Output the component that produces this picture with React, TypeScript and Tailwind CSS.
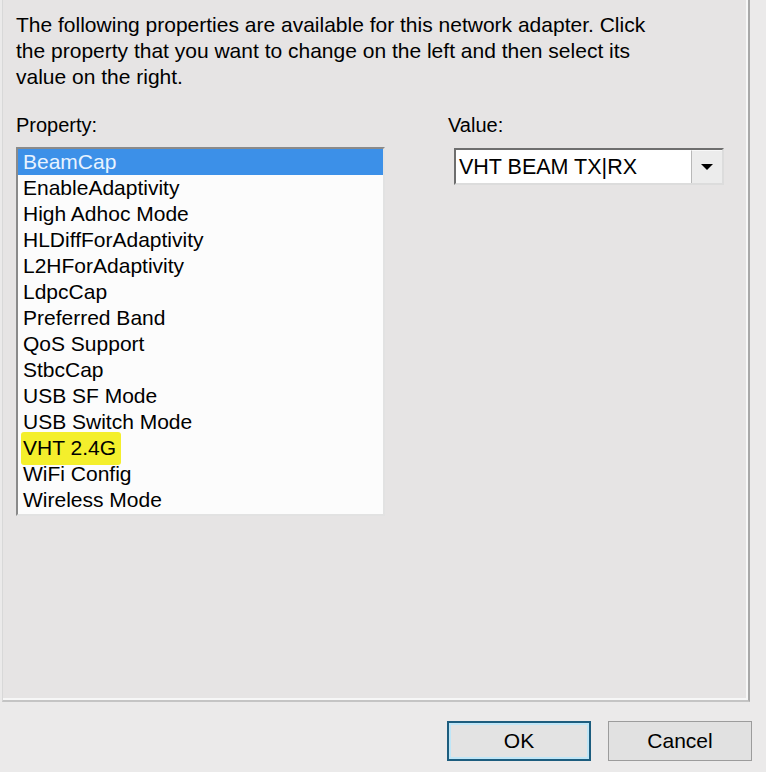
import React from "react";

const items = [
  "BeamCap",
  "EnableAdaptivity",
  "High Adhoc Mode",
  "HLDiffForAdaptivity",
  "L2HForAdaptivity",
  "LdpcCap",
  "Preferred Band",
  "QoS Support",
  "StbcCap",
  "USB SF Mode",
  "USB Switch Mode",
  "VHT 2.4G",
  "WiFi Config",
  "Wireless Mode",
];

export default function App() {
  return (
    <div
      className="w-[766px] h-[772px] bg-[#ebeaea] overflow-hidden text-black"
      style={{ fontFamily: '"Liberation Sans", Arial, sans-serif' }}
    >
      <div className="ml-[2px] w-[748px] h-[702px] bg-[#e6e4e4] border-l border-l-[#d8d8d8] border-r-2 border-r-[#a8a8a8] border-b-2 border-b-[#c4c4c4] shadow-[inset_-2px_-2px_0_#f7f7f7]">
        <div className="pl-[13px] pt-[12px] text-[21px] leading-[26px]">
          <div>The following properties are available for this network adapter. Click</div>
          <div>the property that you want to change on the left and then select its</div>
          <div>value on the right.</div>
        </div>
        <div className="flex pl-[13px] pt-[22px]">
          <div className="w-[369px] flex flex-col">
            <div className="text-[20px] leading-[26px]">Property:</div>
            <div className="mt-[9px] h-[369px] bg-[#fcfcfc] border-2 border-t-[#8a8a8a] border-l-[#8a8a8a] border-r-[#e2e2e2] border-b-[#e2e2e2] text-[21px] leading-[26px]">
              {items.map((it, i) => (
                <div
                  key={it}
                  className={
                    i === 0
                      ? "h-[26px] pl-[5px] bg-[#3c90e8] text-[#e8f3ff]"
                      : "h-[26px] pl-[5px]"
                  }
                >
                  {it === "VHT 2.4G" ? (
                    <span className="-ml-[2px] pl-[2px] pr-[5px] pt-[4px] pb-[6px] bg-[#f4ef2c] rounded-[3px]">
                      {it}
                    </span>
                  ) : (
                    it
                  )}
                </div>
              ))}
            </div>
          </div>
          <div className="ml-[63px] flex flex-col">
            <div className="text-[20px] leading-[26px]">Value:</div>
            <div className="mt-[10px] ml-[6px] w-[270px] h-[37px] bg-white border-2 border-t-[#6e6e6e] border-l-[#6e6e6e] border-r-[#dcdcdc] border-b-[#dcdcdc] flex items-center">
              <div className="flex-1 pl-[3px] text-[21.5px] leading-[26px]">VHT BEAM TX|RX</div>
              <div className="w-[31px] h-[33px] bg-[#ececec] border-l border-l-[#b8b8b8] border-t border-t-[#f8f8f8] flex items-center justify-center">
                <div className="w-0 h-0 border-l-[6px] border-r-[6px] border-t-[6px] border-l-transparent border-r-transparent border-t-black" />
              </div>
            </div>
          </div>
        </div>
      </div>
      <div className="flex justify-end pr-[14px] pt-[19px] gap-[17px]">
        <div className="w-[144px] h-[40px] border-2 border-[#1d5d7e] bg-[#e3e3e3] shadow-[inset_0_0_0_2px_#bfe6f7] flex items-center justify-center text-[21px]">
          OK
        </div>
        <div className="w-[144px] h-[40px] border border-[#9c9c9c] bg-[#e1e1e1] flex items-center justify-center text-[21px]">
          Cancel
        </div>
      </div>
    </div>
  );
}
